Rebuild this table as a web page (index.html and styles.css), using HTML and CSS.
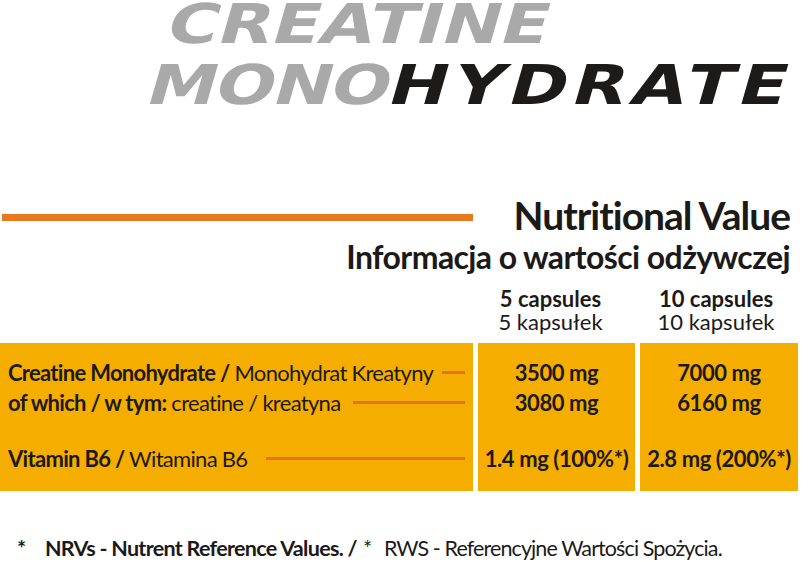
FILE: index.html
```html
<!DOCTYPE html>
<html lang="pl">
<head>
<meta charset="utf-8">
<title>Creatine Monohydrate</title>
<link rel="stylesheet" href="styles.css">
</head>
<body>
<div class="page">
  <header class="title">
    <div class="t-line t1"><span class="t-word"><span class="grey">CREATINE</span></span></div>
    <div class="t-line t2"><span class="t-word"><span class="grey mono">MONO</span><span class="black hydrate">HYDRATE</span></span></div>
  </header>

  <section class="heading">
    <div class="h-row">
      <span class="bar"></span>
      <h1 class="h-main">Nutritional Value</h1>
    </div>
    <h2 class="h-sub">Informacja o wartości odżywczej</h2>
  </section>

  <div class="table">
    <div class="grid thead">
      <div></div>
      <div class="col-head c2"><b>5 capsules</b><span>5 kapsułek</span></div>
      <div class="col-head c3"><b>10 capsules</b><span>10 kapsułek</span></div>
    </div>
    <div class="grid tbody">
      <div class="box labels">
        <div class="row"><span class="lbl"><b>Creatine Monohydrate /</b> Monohydrat Kreatyny</span><span class="leader l1"></span></div>
        <div class="row"><span class="lbl"><b>of which / w tym:</b> creatine / kreatyna</span><span class="leader l2"></span></div>
        <div class="row spaced"><span class="lbl"><b>Vitamin B6 /</b> Witamina B6</span><span class="leader l3"></span></div>
      </div>
      <div class="box vals">
        <div class="row">3500 mg</div>
        <div class="row">3080 mg</div>
        <div class="row spaced">1.4 mg (100%*)</div>
      </div>
      <div class="box vals">
        <div class="row">7000 mg</div>
        <div class="row">6160 mg</div>
        <div class="row spaced">2.8 mg (200%*)</div>
      </div>
    </div>
  </div>

  <p class="foot"><b class="star">*</b><b class="foot-b">NRVs - Nutrent Reference Values. /</b><span class="star2">*</span><span class="foot-r">RWS - Referencyjne Wartości Spożycia.</span></p>
</div>
</body>
</html>
```

FILE: styles.css
```css
html, body {
  margin: 0;
  padding: 0;
  background: #ffffff;
}

.page {
  width: 810px;
  height: 562px;
  overflow: hidden;
  font-family: "Lato", "Noto Sans", sans-serif;
  color: #1c1a19;
}

/* ---------- title ---------- */
.title {
  padding-top: 3px;
  font-family: "DejaVu Sans", "Liberation Sans", sans-serif;
  font-weight: 700;
  font-size: 55px;
  line-height: 42px;
  white-space: nowrap;
}

.t-line {
  height: 42px;
}

.t2 {
  margin-top: 19px;
}

.t-word {
  display: inline-block;
  transform-origin: 0 100%;
  transform: skewX(-16deg) scaleX(1.27);
}

.t1 .t-word {
  margin-left: 163px;
}

.t2 .t-word {
  margin-left: 143px;
}

.grey {
  color: #a9a9a9;
}

.black {
  color: #1d1a1a;
}

.mono {
  letter-spacing: -1px;
}

.hydrate {
  letter-spacing: 4.3px;
}

/* ---------- heading ---------- */
.heading {
  margin-top: 86px;
}

.h-row {
  display: flex;
  align-items: flex-start;
}

.bar {
  display: block;
  width: 471px;
  height: 7px;
  margin-left: 2px;
  margin-top: 22px;
  background: #e8791f;
}

.h-main {
  margin: 0 20px 0 auto;
  font-size: 39px;
  line-height: 46px;
  font-weight: 700;
  letter-spacing: -1px;
}

.h-sub {
  margin: 0;
  padding-right: 20px;
  text-align: right;
  font-size: 32px;
  line-height: 38px;
  font-weight: 700;
  letter-spacing: -0.6px;
}

/* ---------- table ---------- */
.grid {
  display: grid;
  grid-template-columns: 473px 157px 158px;
  column-gap: 5px;
}

.thead {
  margin-top: 11px;
}

.col-head {
  display: flex;
  flex-direction: column;
  align-items: center;
  font-size: 22px;
  line-height: 23px;
}

.col-head.c2 {
  padding-right: 12px;
}

.col-head.c3 {
  padding-right: 6px;
}

.col-head b {
  font-weight: 700;
}

.col-head span {
  font-weight: 400;
}

.tbody {
  margin-top: 10px;
}

.box {
  background: #f5ad00;
  padding: 15px 8px 17px 8px;
  height: 148px;
  box-sizing: border-box;
}

.row {
  height: 30px;
  line-height: 30px;
  font-size: 22px;
  white-space: nowrap;
}

.row.spaced {
  margin-top: 26px;
}

.labels .row {
  display: flex;
  align-items: center;
  letter-spacing: -0.7px;
}

.lbl b {
  font-weight: 700;
}

.leader {
  flex: 1;
  height: 3px;
  margin-top: -1px;
  background: #e3741d;
}

.l1 {
  margin-left: 9px;
}

.l2 {
  margin-left: 13px;
}

.l3 {
  margin-left: 19px;
}

.vals {
  padding-left: 0;
  padding-right: 0;
  text-align: center;
  font-weight: 700;
}

.vals .row {
  letter-spacing: -0.4px;
}

/* ---------- footer ---------- */
.foot {
  margin: 42px 0 0 0;
  padding-left: 17px;
  font-size: 21.5px;
  line-height: 30px;
  white-space: nowrap;
}

.foot b {
  font-weight: 700;
}

.foot-b {
  letter-spacing: -0.7px;
}

.foot-r {
  letter-spacing: -0.9px;
}

.star {
  display: inline-block;
  width: 28px;
}

.star2 {
  display: inline-block;
  margin-left: 6px;
  width: 21px;
}
```
